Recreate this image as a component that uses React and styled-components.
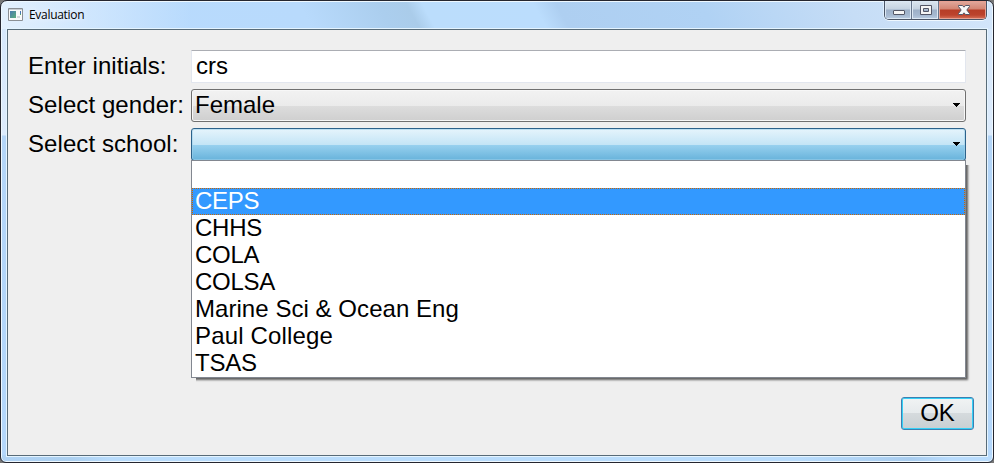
import React from "react";
import styled, { createGlobalStyle } from "styled-components";

const GlobalStyle = createGlobalStyle`
  html, body { margin: 0; padding: 0; overflow: hidden; background: #777; }
  *, *::before, *::after { box-sizing: border-box; }
`;

const Window = styled.div`
  width: 994px;
  height: 463px;
  display: flex;
  flex-direction: column;
  padding: 0 6px 6px;
  border: 1px solid #25262f;
  border-radius: 7px 7px 6px 6px;
  box-shadow: inset 0 0 0 1px #eef8ff;
  background:
    linear-gradient(90deg, #e3f0fd 0, rgba(227, 240, 253, 0) 190px) 0 0 / 100% 28px no-repeat,
    linear-gradient(62deg, #b8dbfe 0, #b8dafc 275px, #abceee 345px, #aaccea 370px, #bbddfc 384px, #bbddfd 482px, #aecff1 502px, #b0d2f4 630px, #c6ddf6 760px, #d2e5fa 880px) 0 0 / 100% 28px no-repeat,
    linear-gradient(#d5e7fb 0, #dcebfc 134px, #b3d5f8 135px, #b4d7fb 430px) 0 0 / 100% 454px no-repeat,
    linear-gradient(90deg, #b0d3f5 0, #acd0f0 70px, #b9dcfc 110px, #b9dcfc 800px, #a9cdef 910px, #b9dcfd 950px);
`;

const TitleBar = styled.header`
  height: 28px;
  flex: none;
  display: flex;
  align-items: flex-start;
  padding-left: 1px;
`;

const AppIcon = styled.svg`
  width: 15px;
  height: 13px;
  margin-top: 7px;
  flex: none;
`;

const Title = styled.div`
  flex: 1;
  margin: 5px 0 0 6px;
  font: 12px/17px "Open Sans", "Noto Sans", sans-serif;
  letter-spacing: -0.3px;
  color: #000;
  text-shadow: 0 0 6px #fff;
`;

const Controls = styled.div`
  display: flex;
  width: 103px;
  height: 19px;
  border: 1px solid #4a5567;
  border-top: 0;
  border-radius: 0 0 5px 5px;
  box-shadow: 0 1px 0 #eff8ff, 1px 0 0 #e0f0ff, -1px 0 0 #e0f0ff;
  overflow: hidden;
`;

const ControlButton = styled.button`
  flex: ${(p) => (p.$close ? "1" : "0 0 27px")};
  display: flex;
  justify-content: center;
  padding: 0 0 0 ${(p) => (p.$close ? "2px" : "1px")};
  border: 0;
  border-right: ${(p) => (p.$close ? "0" : "1px solid #66758b")};
  box-shadow: inset 0 0 0 1px ${(p) => (p.$close ? "#e7a193" : "#dce8f4")};
  background: ${(p) =>
    p.$close
      ? "linear-gradient(#e2aa9e 0, #d38573 8px, #b73d27 9px, #bc432d 14px, #df8068 19px)"
      : "linear-gradient(#dce6f0 0, #c5d2e1 8px, #9db0c8 9px, #a5b8d0 14px, #bfd1e6 19px)"};
`;

const Client = styled.main`
  flex: 1;
  display: flex;
  flex-direction: column;
  padding: 20px 12px 25px 20px;
  border: 1px solid #586b78;
  box-shadow: 0 0 0 1px #e4f4ff;
  background: #efefef;
  font: 24px/33px "Liberation Sans", Arial, sans-serif;
  color: #000;
`;

const Form = styled.form`
  display: grid;
  grid-template-columns: 163px 775px;
  grid-auto-rows: 33px;
  row-gap: 6px;
`;

const Label = styled.label`
  white-space: nowrap;
  line-height: 32px;
  letter-spacing: 0.08px;
`;

const TextInput = styled.input`
  width: 100%;
  height: 33px;
  padding: 0 4px 1px;
  border: 1px solid #e2e6ee;
  border-top-color: #abadb3;
  border-radius: 1px;
  outline: 0;
  background: #fff;
  color: #000;
  font: inherit;
  line-height: 30px;
`;

const ComboWrap = styled.div`
  position: relative;
`;

const Combo = styled.div`
  display: flex;
  align-items: center;
  justify-content: space-between;
  height: 33px;
  padding: 0 5px 1px 3px;
  border: 1px solid ${(p) => (p.$open ? "#2c628b" : "#707070")};
  border-radius: 3px;
  box-shadow: inset 0 0 0 1px ${(p) => (p.$open ? "rgba(158, 207, 233, .55)" : "#f7f7f7")};
  line-height: 30px;
  background: ${(p) =>
    p.$open
      ? "linear-gradient(#e5f4fc 0, #c4e5f6 50%, #98d1ef 51%, #68b3db 100%)"
      : "linear-gradient(#f2f2f2 0, #ebebeb 50%, #dddddd 51%, #cfcfcf 100%)"};
`;

const Arrow = styled.svg`
  width: 7px;
  height: 4px;
  flex: none;
`;

const Popup = styled.ul`
  position: absolute;
  z-index: 1;
  top: 32px;
  left: 0;
  width: 775px;
  margin: 0;
  padding: 0;
  list-style: none;
  border: 1px solid #828790;
  background: #fff;
  box-shadow: 2px 2px 2px rgba(0, 0, 0, .6);
  clip-path: polygon(0 0, 775px 0, 775px 5px, 780px 5px, 780px 223px, 5px 223px, 5px 218px, 0 218px);
`;

const focusDots = (angle, place) =>
  `linear-gradient(${angle}, #cc6600 50%, #3399ff 50%) ${place}`;

const Option = styled.li`
  height: 27px;
  padding-left: 3px;
  line-height: 25px;
  letter-spacing: ${(p) => p.$tracking || "-0.25px"};
  color: ${(p) => (p.$selected ? "#fff" : "#000")};
  background: ${(p) =>
    p.$selected
      ? [
          focusDots("90deg", "0 0 / 2px 1px repeat-x"),
          focusDots("90deg", "0 100% / 2px 1px repeat-x"),
          focusDots("180deg", "0 0 / 1px 2px repeat-y"),
          focusDots("180deg", "100% 0 / 1px 2px repeat-y"),
          "#3399ff",
        ].join(", ")
      : "#fff"};
`;

const Footer = styled.footer`
  margin-top: auto;
  display: flex;
  justify-content: flex-end;
`;

const OkButton = styled.button`
  width: 73px;
  height: 33px;
  padding: 0 0 1px;
  border: 1px solid #3c7fb1;
  border-radius: 3px;
  box-shadow: inset 0 0 0 1px #35d0f6;
  background: linear-gradient(#f1f3f4 0, #e6eaec 48%, #d5dadd 50%, #c9d0d3 100%);
  color: #000;
  font: inherit;
  line-height: 30px;
`;

const schools = [
  { name: "" },
  { name: "CEPS" },
  { name: "CHHS" },
  { name: "COLA" },
  { name: "COLSA" },
  { name: "Marine Sci & Ocean Eng", tracking: "0.05px" },
  { name: "Paul College", tracking: "0.15px" },
  { name: "TSAS" },
];

function DropArrow() {
  return (
    <Arrow viewBox="0 0 7 4" shapeRendering="crispEdges">
      <path d="M0 0h7v1H6v1H5v1H4v1H3V3H2V2H1V1H0z" fill="#000" />
    </Arrow>
  );
}

export default function App() {
  return (
    <>
      <GlobalStyle />
      <Window>
        <TitleBar>
          <AppIcon viewBox="0 0 15 13">
            <defs>
              <linearGradient id="pane" x2="1" y2="1">
                <stop stopColor="#4b7bb0" />
                <stop offset="1" stopColor="#5cae7b" />
              </linearGradient>
            </defs>
            <path d="M.5.5h14v12H.5z" fill="#fafafa" stroke="#8b8f94" />
            <path d="M1 1h13v1H1z" fill="#c9ced3" />
            <path d="M2 3h6v7H2z" fill="url(#pane)" />
            <path d="M9 8h3v2H9z" fill="#d3d8dc" />
            <path d="M12 3h1v3h-1z" fill="#4777b5" />
            <path d="M12 6h1v1h-1z" fill="#56ad67" />
          </AppIcon>
          <Title>Evaluation</Title>
          <Controls>
            <ControlButton type="button" aria-label="Minimize">
              <svg width="14" height="18" viewBox="0 0 14 18">
                <rect x="1.5" y="9.5" width="11" height="4" rx=".5" fill="#f5f5f5" stroke="#535666" />
              </svg>
            </ControlButton>
            <ControlButton type="button" aria-label="Maximize">
              <svg width="14" height="18" viewBox="0 0 14 18">
                <path d="M1.5 4.5h11v9h-11zM4.5 7.5v3h5v-3z" fill="#f5f5f5" fillRule="evenodd" stroke="#535666" />
              </svg>
            </ControlButton>
            <ControlButton type="button" $close aria-label="Close">
              <svg width="14" height="18" viewBox="0 0 14 18">
                <path d="M1.5 4.5h4L7 6.2l1.5-1.7h4v1L9.8 9l2.7 3.5v1h-4L7 11.8l-1.5 1.7h-4v-1L4.2 9 1.5 5.5z" fill="#f8f8f8" stroke="#535666" />
              </svg>
            </ControlButton>
          </Controls>
        </TitleBar>
        <Client>
          <Form onSubmit={(e) => e.preventDefault()}>
            <Label htmlFor="initials">Enter initials:</Label>
            <TextInput id="initials" defaultValue="crs" />
            <Label>Select gender:</Label>
            <Combo>
              <span>Female</span>
              <DropArrow />
            </Combo>
            <Label>Select school:</Label>
            <ComboWrap>
              <Combo $open>
                <span />
                <DropArrow />
              </Combo>
              <Popup>
                {schools.map(({ name, tracking }) => (
                  <Option key={name} $selected={name === "CEPS"} $tracking={tracking}>
                    {name}
                  </Option>
                ))}
              </Popup>
            </ComboWrap>
          </Form>
          <Footer>
            <OkButton type="button">OK</OkButton>
          </Footer>
        </Client>
      </Window>
    </>
  );
}
